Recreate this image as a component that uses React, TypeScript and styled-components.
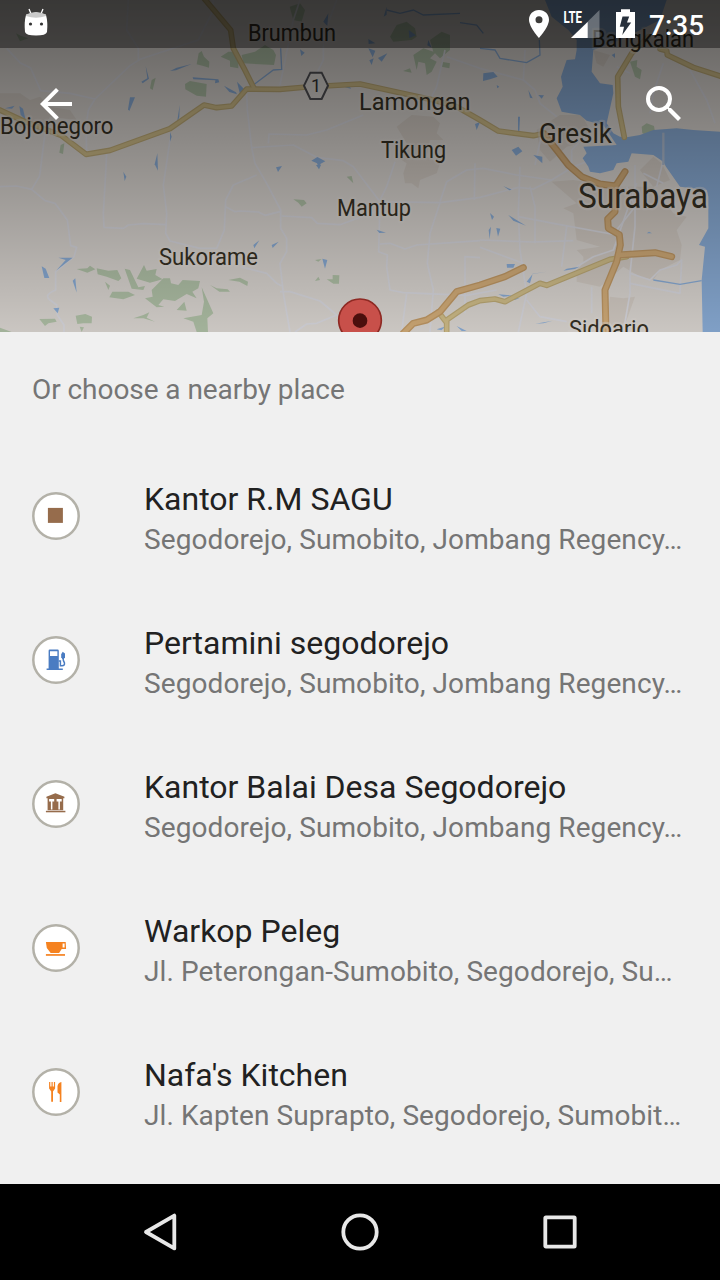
import React from 'react';
import styled, { createGlobalStyle } from 'styled-components';

const GlobalStyle = createGlobalStyle`
  * { box-sizing: border-box; }
  body { margin: 0; background: #f0f0f0; font-family: Roboto, "Liberation Sans", sans-serif; }
`;

const Screen = styled.div`
  width: 720px;
  height: 1280px;
  display: flex;
  flex-direction: column;
  overflow: hidden;
  background: #f0f0f0;
`;

const MapHeader = styled.header`
  position: relative;
  height: 332px;
  flex: none;
  overflow: hidden;
`;

const MapCanvas = styled.svg`
  display: block;
  width: 720px;
  height: 332px;
`;

const Overlay = styled.div`
  position: absolute;
  inset: 0;
  display: flex;
  flex-direction: column;
`;

const StatusBar = styled.div`
  height: 48px;
  display: flex;
  align-items: center;
  justify-content: space-between;
  padding: 0 15px 0 24px;
  background: rgba(0, 0, 0, 0.4);
`;

const StatusIcons = styled.div`
  display: flex;
  align-items: center;
`;

const Clock = styled.span`
  width: 56px;
  margin-left: 13px;
  padding-top: 4px;
  color: #fff;
  font-size: 28px;
  font-weight: 500;
  line-height: 32px;
  white-space: nowrap;
`;

const Toolbar = styled.div`
  height: 112px;
  display: flex;
  align-items: center;
  justify-content: space-between;
  padding: 0 32px;
`;

const IconButton = styled.button`
  width: 48px;
  height: 48px;
  padding: 0;
  border: 0;
  background: none;
  display: flex;
`;

const Places = styled.main`
  flex: 1;
  display: flex;
  flex-direction: column;
`;

const SectionTitle = styled.h2`
  margin: 0;
  height: 112px;
  padding: 41px 32px 0;
  font-size: 28px;
  font-weight: 400;
  line-height: 33px;
  letter-spacing: -0.06px;
  color: #757575;
`;

const List = styled.ul`
  margin: 0;
  padding: 0;
  list-style: none;
`;

const Row = styled.li`
  height: 144px;
  display: flex;
  padding: 36px 32px 0;
  gap: 64px;
`;

const Badge = styled.div`
  width: 48px;
  height: 48px;
  margin-top: 12px;
  flex: none;
`;

const RowText = styled.div`
  display: flex;
  flex-direction: column;
  gap: 5px;
  white-space: nowrap;
`;

const PlaceName = styled.div`
  font-size: 32px;
  line-height: 38px;
  color: #212121;
`;

const PlaceAddress = styled.div`
  font-size: 28px;
  line-height: 33px;
  letter-spacing: 0.09px;
  color: #757575;
`;

const NavBar = styled.nav`
  height: 96px;
  flex: none;
  display: flex;
  align-items: center;
  justify-content: center;
  gap: 152px;
  background: #000;
`;

/* Map geometry uses three units per pixel. */
const minorRoads = [
  'M20 145L60 188L92 204L122 272L210 280L285 297',
  'M265 330L285 297L390 197L420 178L520 145L595 120L635 40L640 0',
  'M385 0L380 90L415 145L415 180M265 330L258 380L260 460',
  'M135 400L120 520L118 530L95 568M0 560L50 558L95 568L135 602L165 610L202 660L212 737L230 742L222 770L167 815L167 870Q130 885 150 900L170 915L172 945L192 975V996',
  'M320 460L317 520L310 640L312 682L370 685L385 675L430 671L500 674',
  'M510 420L490 555L500 640L497 700L510 723L600 745L650 745L673 690L677 600L700 555L770 525',
  'M677 620L705 635L720 633L775 636L795 646L843 634',
  'M740 280L742 330L755 443L765 490L800 550L842 630L842 685L860 715L860 755L840 790L850 880L870 996',
  'M755 443L880 435L950 472L1030 482L1060 500L1140 605',
  'M805 430L807 402L920 405L980 390L1090 345',
  'M1010 0L970 110L970 180L940 240M840 255L880 60L900 0',
  'M1335 150L1310 260L1275 330M1340 170L1440 205L1570 240L1605 270L1620 310L1670 350',
  'M845 648L935 653L952 670L1020 674L1140 630M1140 605L1320 608L1440 592L1555 562L1600 567L1655 540L1720 500L1850 450',
  'M1185 485L1160 560L1140 600L1136 755L1162 765L1160 800L1170 870L1210 878L1400 886L1490 870',
  'M1140 732L1170 730L1215 747L1250 735L1440 722M1320 608L1290 700L1282 790L1300 870L1290 996M1220 880L1205 996',
  'M1320 605L1340 545L1400 510L1450 505L1550 525L1655 540M1425 490L1423 600',
  'M1560 500L1555 640L1560 750L1580 880L1555 996M1590 560L1605 620L1605 730',
  'M1555 650L1660 670L1850 705M1440 720L1600 726L1720 722M1700 680L1685 800M1440 742L1570 790',
  'M840 875L870 875L960 903L1010 945L950 970L920 972L885 996M1010 945L1060 975M720 800L800 820L830 850L845 858',
  'M1905 495L1905 680L1890 820L1890 880L1870 996M1890 820L1950 840L1980 810L2030 795L2045 780L2040 880L1890 850M1580 900L1620 950L1700 965',
  'M1910 550L1840 750L1780 770L1730 800M1630 380L1605 495M1770 395L1715 450L1715 500M1570 240L1575 150',
  'M1990 190L1960 280L1950 340M2070 210L2120 300L2145 370M1890 220L1850 200',
  'M1880 560L1905 620L1850 690M1930 520L1990 550M1990 400V480L1970 560',
  'M1395 940L1395 770L1440 773M1775 860V940',
];

const lakes = [
  'M437 198L447 236L428 250L424 245L442 235Z', 'M510 213L530 203L575 192L528 211Z',
  'M578 232L655 238L658 247L645 250L646 241L580 238Z', 'M390 292L405 292L388 333L384 328Z',
  'M58 318L69 326L77 360L62 344Z', 'M15 325L44 317L36 326Z', 'M672 257L708 277L711 283L688 276Z',
  'M711 245L735 270L720 283Z', 'M539 315L538 350L530 375ZM510 395L515 410L510 425Z',
  'M472 460L474 512L464 493Z', 'M370 515L379 530L374 543Z', 'M125 799L137 806L148 834L133 834Z',
  'M175 773L218 773L168 812L197 780Z', 'M226 835L230 878L218 842Z', 'M160 925L178 923L173 940Z',
  'M760 735L778 721L763 745ZM815 735L836 725L818 744Z', 'M967 776L982 780L975 806Z',
  'M828 502L846 498L834 516Z', 'M948 495L963 495L957 508Z',
  'M934 482L952 471L976 484L962 491L957 506L951 490Z', 'M900 148L914 158L904 168Z',
  'M1105 145L1126 152L1118 172ZM1108 181L1121 175L1115 195ZM1134 174L1162 160L1145 185Z',
  'M1105 117L1126 130L1106 132ZM1151 50L1160 20L1160 44ZM1226 90L1248 106L1228 114ZM1285 120L1295 143L1282 136Z',
  'M1034 262L1050 260L1053 266Z', 'M1130 689L1158 698L1138 699Z', 'M1425 372L1440 366L1430 390Z',
  'M1450 220L1480 216L1493 230L1470 238L1449 243ZM1490 255L1498 260L1492 265Z',
  'M1585 270L1598 295L1590 293ZM1615 285L1632 286L1625 296Z', 'M1535 450L1555 440L1567 454L1548 467Z',
  'M1600 465L1627 470L1627 490Z', 'M1554 350L1560 350L1558 394L1554 392Z',
  'M1510 558L1535 569L1528 571Z', 'M1470 639L1482 650L1476 660ZM1466 690L1473 680L1469 718ZM1489 684L1501 686L1494 710Z',
  'M1525 645L1578 677L1540 662Z', 'M1520 792L1545 792L1540 803L1521 803Z',
  'M1580 845L1598 822L1640 815L1598 821L1590 850Z', 'M1700 806L1738 800L1725 807L1690 812Z',
  'M1495 883L1540 887L1510 890ZM1516 897L1560 893L1545 900Z', 'M1940 700L1947 695L1956 700Z',
  'M1606 971L1658 962L1630 970Z', 'M1835 165L1845 160L1845 174Z',
  'M894 95L912 78L908 94ZM970 65L985 40L982 78Z', 'M1020 985L1040 978L1025 996Z',
  'M1310 988L1338 979L1324 991ZM1370 978L1400 993L1385 993Z',
];

const forests = [
  'M605 153L612 170L628 185L627 203L610 198L590 193L596 160Z', 'M662 170L685 155L715 155L715 205L690 200L690 182Z',
  'M555 252L570 243L620 252L618 290L590 287L556 268Z', 'M182 435L193 430L189 462L178 458Z', 'M455 240L467 233L458 270L450 265Z',
  'M725 165L765 155L795 135L820 150L828 165L822 195L730 190Z',
  'M869 20L900 10L915 30L905 65L880 60Z',
  'M1170 110L1190 75L1220 65L1245 85L1250 110L1235 120L1180 125Z',
  'M1240 165L1270 145L1300 155L1290 120L1325 95L1350 105L1350 150L1320 175L1305 160L1290 175L1310 185L1295 215L1280 225L1275 190L1255 185L1250 210Z',
  'M1209 213L1230 205L1235 218Z', 'M1325 185L1350 190L1348 205L1325 200Z', 'M48 100L62 107L85 115L60 124Z',
  'M230 807L262 805L270 797L286 808L262 818Z', 'M290 805L325 812L352 810L364 835L355 843L320 830L293 823Z',
  'M374 806L390 810L415 862L435 858L430 870L395 866Z', 'M432 795L440 812L470 807L466 825L488 838L450 848L410 836Z',
  'M455 870L490 835L510 835L513 850L535 855L548 840L600 843L595 865L577 875L590 895L560 882L525 903L490 898L475 915L493 920L470 922L435 895L458 890Z',
  'M605 862L640 940L622 955L624 996H590L580 965L550 955L605 945L612 905Z', 'M337 875L385 875L405 885L370 898L328 892Z',
  'M315 845L330 857L325 870ZM530 930L553 905L560 932Z', 'M400 955L430 945L448 937L440 953L465 965L430 955Z',
  'M227 947L256 942L276 950L275 970L250 970L232 972ZM239 980L252 982L245 996Z',
  'M118 957L165 956L170 965L145 970L135 978Z', 'M0 983L35 996H0Z', 'M630 855L650 865L683 868L690 875L658 875Z',
  'M685 840L720 833L744 845L742 858L718 845Z', 'M880 598L912 600L920 610L905 620L895 608Z',
  'M980 838L998 838V825L1018 826L1017 851L1000 851Z', 'M1040 530L1055 528L1060 550Z', 'M945 843L955 830L960 840Z',
  'M1890 185L1912 180L1910 200L1925 210L1920 238L1905 230Z', 'M1927 400L1925 380L1940 370L1962 378L1965 396L1940 405Z', 'M945 780L965 777L955 785Z',
];

const yellowRoads = [
  'M0 330L75 365L185 407L258 463L330 451L510 386L612 315L650 323L695 318L740 267L840 268L920 261L1080 252L1200 278L1300 300L1370 320L1440 360L1495 393L1600 407L1635 400',
  'M612 -5L692 90L700 145L732 205L762 265',
  'M1945 110L1895 160L1853 230L1855 320L1873 412',
  'M1980 147L2000 152L2002 165L2080 202L2160 228',
  'M1880 770L1830 778L1640 856L1620 850L1515 905L1485 897L1440 902L1405 915L1340 960V1000M1315 935L1340 968',
];
const orangeRoads = [
  'M1630 400L1670 450L1705 495L1745 530L1800 552L1847 558L1875 515',
  'M1845 557L1845 635L1823 657L1825 685L1858 704L1861 735L1850 785L1815 870L1818 1000',
  'M1855 765L1965 758L2015 770',
  'M1570 803L1515 830L1440 855L1370 875L1320 935L1280 960L1240 970L1210 1000',
];

const labels: [string, number, number, number, number][] = [
  ['Brumbun', 248, 40.5, 88, 23.5], ['Bojonegoro', 0, 133.5, 113.5, 23.5],
  ['Lamongan', 359, 110, 111.5, 24.5], ['Tikung', 381, 158, 65, 23.5],
  ['Mantup', 337, 216, 74, 23.5], ['Sukorame', 159, 265, 99, 23.5],
  ['Bangkalan', 592, 46.5, 102, 23.5], ['Gresik', 539, 142.5, 73, 27.5],
  ['Surabaya', 578, 208.3, 130, 34.5], ['Sidoarjo', 569, 337, 80, 23.5],
];

function RegionMap() {
  return (
    <MapCanvas viewBox="0 0 2160 996" role="img" aria-label="Map around Surabaya">
      <defs>
        <linearGradient id="shade" x1="0" y1="0" x2="0" y2="1">
          <stop offset="0" stopColor="#000" stopOpacity="0.595" />
          <stop offset="1" stopColor="#000" stopOpacity="0.14" />
        </linearGradient>
      </defs>
      <rect width="2160" height="996" fill="#ebe6e1" />
      <g fill="#e2dad2">
        <path d="M0 280L60 280L90 300L120 290L150 320L210 330L230 360L150 350L120 400L60 380L0 320Z" />
        <path d="M1235 345L1300 350L1320 370L1310 400L1330 420L1290 420L1280 470L1320 490L1310 520L1260 540L1255 565L1235 550L1215 550L1210 520L1220 490L1190 470L1220 430L1190 380Z" />
        <path d="M1610 390L1680 345L1745 345L1770 390L1740 430L1700 440L1650 485L1620 450Z" />
        <path d="M1655 545L1720 540L1850 560L1960 560L2020 640L2060 650L2030 690L2045 735L2040 780L1980 810L1960 840L1920 830L1870 800L1800 860L1730 845L1730 810L1750 790L1750 770L1730 750L1800 740L1730 720L1720 640L1690 625L1730 610Z" />
        <path d="M1830 890L1870 895L1905 890L1880 960L1850 990L1820 960ZM1780 150L1830 165L1810 200L1790 190ZM1920 510L1960 470L1985 490L2010 540L1960 560Z" />
      </g>
      <g fill="#bdcfb3">{forests.map((d) => <path key={d} d={d} />)}</g>
      <g fill="none" stroke="#e9e9f0" strokeWidth="5" strokeLinejoin="round">
        {minorRoads.map((d) => <path key={d} d={d} />)}
      </g>
      <g fill="#94b9e6">
        <path d="M1635 0L1655 50L1705 90L1730 120V150L1725 178L1700 180L1683 230L1688 260L1670 295L1685 335L1740 345L1760 362L1810 375L1850 435L1750 440L1760 460L1748 475L1765 500L1770 515L1800 520L1840 510L1850 490L1885 485L1895 460L1960 465L1990 485L1998 500L2040 560L2120 570L2125 590V685L2097 735L2115 740L2105 840L2108 996H2160V395L2080 390L2030 385L1960 390L1920 405L1880 412L1860 410L1840 400L1820 370L1840 280L1838 255L1800 250L1775 215L1780 150L1860 120L1980 60L2000 0Z" />
        {lakes.map((d) => <path key={d} d={d} />)}
      </g>
      <path d="M842 145L845 208L820 210L760 255M1160 30L1200 40L1240 30L1270 45L1380 40M1440 145L1485 150L1500 175L1580 188L1620 165L1618 120M1380 68L1430 75L1450 100M1960 840L2040 853L2105 842" fill="none" stroke="#94b9e6" strokeWidth="4" />
      <path d="M1990 398V495" stroke="#bccbe0" strokeWidth="7" />
      <g fill="none" strokeLinejoin="round" strokeLinecap="round">
        {yellowRoads.map((d) => <path key={d} d={d} stroke="#ccb77f" strokeWidth="17" />)}
        {yellowRoads.map((d) => <path key={d} d={d} stroke="#dfcb93" strokeWidth="10" />)}
        {orangeRoads.map((d) => <path key={d} d={d} stroke="#cfa46c" strokeWidth="21" />)}
        {orangeRoads.map((d) => <path key={d} d={d} stroke="#e2b981" strokeWidth="13" />)}
      </g>
      <path d="M931 218H965L984 257L965 297H931L912 257Z" fill="#eeeae5" stroke="#56565a" strokeWidth="6" />
      <text x="933" y="276" fontFamily="Roboto, sans-serif" fontSize="54" fill="#333">1</text>
      {labels.map(([name, x, y, width, size]) => (
        <text
          key={name}
          x={x * 3}
          y={y * 3}
          textLength={width * 3}
          lengthAdjust="spacingAndGlyphs"
          fontSize={size * 3}
          fontFamily="Roboto, sans-serif"
          fill="#3a3426"
          stroke="#f3eeea"
          strokeOpacity="0.45"
          strokeWidth="14"
          strokeLinejoin="round"
          paintOrder="stroke"
        >
          {name}
        </text>
      ))}
      <rect width="2160" height="996" fill="url(#shade)" />
      <circle cx="1080" cy="961" r="64" fill="#c8504a" stroke="#8e2923" strokeWidth="5" />
      <circle cx="1080" cy="962" r="22" fill="#4b0f0d" />
    </MapCanvas>
  );
}

const brown = '#966c4c';
const orange = '#f58220';

const places = [
  {
    name: 'Kantor R.M SAGU',
    address: 'Segodorejo, Sumobito, Jombang Regency…',
    icon: <path d="M13.5 13.5H28.5V28.5H13.5Z" fill={brown} />,
  },
  {
    name: 'Pertamini segodorejo',
    address: 'Segodorejo, Sumobito, Jombang Regency…',
    icon: (
      <g fill="#4a7cc2">
        <path fillRule="evenodd" d="M15.4 11.2H23.2Q24.4 11.2 24.4 12.4V30H28.4V31.7H12.2V30H14.2V12.4Q14.2 11.2 15.4 11.2ZM15.6 12.9V17.6H23V12.9Z" />
        <path d="M28.3 13.4L30.6 15.2V19L29.2 20.7H28.1L26.8 19V15.8Z" />
        <path d="M28.6 19.5Q28.7 22.5 30 24.3Q30.6 27.3 27.7 27.3H26V22.5H24.3" fill="none" stroke="#4a7cc2" strokeWidth="1.5" />
      </g>
    ),
  },
  {
    name: 'Kantor Balai Desa Segodorejo',
    address: 'Segodorejo, Sumobito, Jombang Regency…',
    icon: (
      <g fill={brown}>
        <path fillRule="evenodd" d="M21 10.8L30 14.3V15.8H28.8V27.8H13.2V15.8H12V14.3ZM14.7 16.7V19.2H16.5V27H18V19.2H19.8V16.7ZM22.2 16.7V19.2H24V27H25.5V19.2H27.3V16.7Z" />
        <path d="M11.5 28.4H31V29.9H11.5Z" />
      </g>
    ),
  },
  {
    name: 'Warkop Peleg',
    address: 'Jl. Peterongan-Sumobito, Segodorejo, Su…',
    icon: (
      <g fill={orange}>
        <path fillRule="evenodd" d="M11.5 15.6H31.3L31.7 22.5H27.3L24.7 26.6H16.3L12.4 21.6ZM28.2 17.2V21.2H30.2V17.2Z" />
        <path d="M11.5 27.7H30.6V29.4H11.5Z" />
      </g>
    ),
  },
  {
    name: "Nafa's Kitchen",
    address: 'Jl. Kapten Suprapto, Segodorejo, Sumobit…',
    icon: (
      <g fill={orange}>
        <path d="M14.7 11.5H15.9V16.2H17.1V11.5H18.3V16.2H19.5V11.5H20.7V18L18.6 21V31.3H16.8V21L14.7 18Z" />
        <path d="M27 11.5V31.5H25.4V24L23.1 22V15.5Q23.8 12 27 11.5Z" />
      </g>
    ),
  },
];

export default function App() {
  return (
    <Screen>
      <GlobalStyle />
      <MapHeader>
        <RegionMap />
        <Overlay>
          <StatusBar>
            <svg width="24" height="32" viewBox="0 0 24 32">
              <path d="M5 1L7.5 7M19 1L16.5 7" stroke="#fff" strokeWidth="1.3" />
              <path d="M2 7Q12 2 22 7Q24 14 23 24Q22 27.5 12 27.5Q2 27.5 1 24Q0 14 2 7Z" fill="#fff" />
              <path d="M2 6.5Q12 1.5 22 6.5V8Q12 11.5 2 8Z" fill="#cacaca" />
              <circle cx="6.5" cy="16" r="1.6" fill="#333" />
              <circle cx="17.5" cy="16" r="1.6" fill="#333" />
            </svg>
            <StatusIcons>
              <svg width="108" height="48" viewBox="528 0 108 48">
                <path fillRule="evenodd" d="M539 10C533.2 10 529 14.3 529 19.8C529 27 539 38 539 38S549 27 549 19.8C549 14.3 544.8 10 539 10ZM539 16.2A3.5 3.5 0 1 1 539 23.2A3.5 3.5 0 0 1 539 16.2Z" fill="#fff" />
                <path d="M599.5 10V38H571Z" fill="#fff" opacity="0.3" />
                <path d="M587.7 22V38H571Z" fill="#fff" />
                <text x="563.5" y="22.5" textLength="18.5" lengthAdjust="spacingAndGlyphs" fontFamily="Roboto, sans-serif" fontWeight="700" fontSize="17" fill="#fff">LTE</text>
                <path fillRule="evenodd" d="M621 9.3H630V12H635V38H616V12H621ZM622.5 16.5L619.8 26.8H624L622.3 35L631.2 22.5H627L629.2 16.5Z" fill="#fff" />
              </svg>
              <Clock>7:35</Clock>
            </StatusIcons>
          </StatusBar>
          <Toolbar>
            <IconButton aria-label="Back">
              <svg width="48" height="48" viewBox="0 0 24 24">
                <path d="M20 11H7.83l5.59-5.59L12 4l-8 8 8 8 1.41-1.41L7.83 13H20z" fill="#fff" />
              </svg>
            </IconButton>
            <IconButton aria-label="Search">
              <svg width="48" height="48" viewBox="0 0 24 24">
                <path d="M15.5 14h-.79l-.28-.27A6.47 6.47 0 0 0 16 9.5 6.5 6.5 0 1 0 9.5 16c1.61 0 3.09-.59 4.23-1.57l.27.28v.79l5 4.99L20.49 19zm-6 0a4.5 4.5 0 1 1 0-9 4.5 4.5 0 0 1 0 9" fill="#fff" />
              </svg>
            </IconButton>
          </Toolbar>
        </Overlay>
      </MapHeader>
      <Places>
        <SectionTitle>Or choose a nearby place</SectionTitle>
        <List>
          {places.map((place) => (
            <Row key={place.name}>
              <Badge>
                <svg width="48" height="48" viewBox="0 0 48 48">
                  <circle cx="24" cy="24" r="22.7" fill="#fff" stroke="#b3b1a8" strokeWidth="2.5" />
                  <g transform="translate(2.4 2.4)">{place.icon}</g>
                </svg>
              </Badge>
              <RowText>
                <PlaceName>{place.name}</PlaceName>
                <PlaceAddress>{place.address}</PlaceAddress>
              </RowText>
            </Row>
          ))}
        </List>
      </Places>
      <NavBar>
        <svg width="48" height="48" viewBox="0 0 48 48">
          <path d="M38.3 7.6V40.4L10 24Z" fill="none" stroke="#e8e8e8" strokeWidth="3.8" strokeLinejoin="round" />
        </svg>
        <svg width="48" height="48" viewBox="0 0 48 48">
          <circle cx="24" cy="24" r="16.7" fill="none" stroke="#e8e8e8" strokeWidth="3.8" />
        </svg>
        <svg width="48" height="48" viewBox="0 0 48 48">
          <rect x="9.3" y="9.3" width="29.4" height="29.4" rx="0.6" fill="none" stroke="#e8e8e8" strokeWidth="3.8" />
        </svg>
      </NavBar>
    </Screen>
  );
}
